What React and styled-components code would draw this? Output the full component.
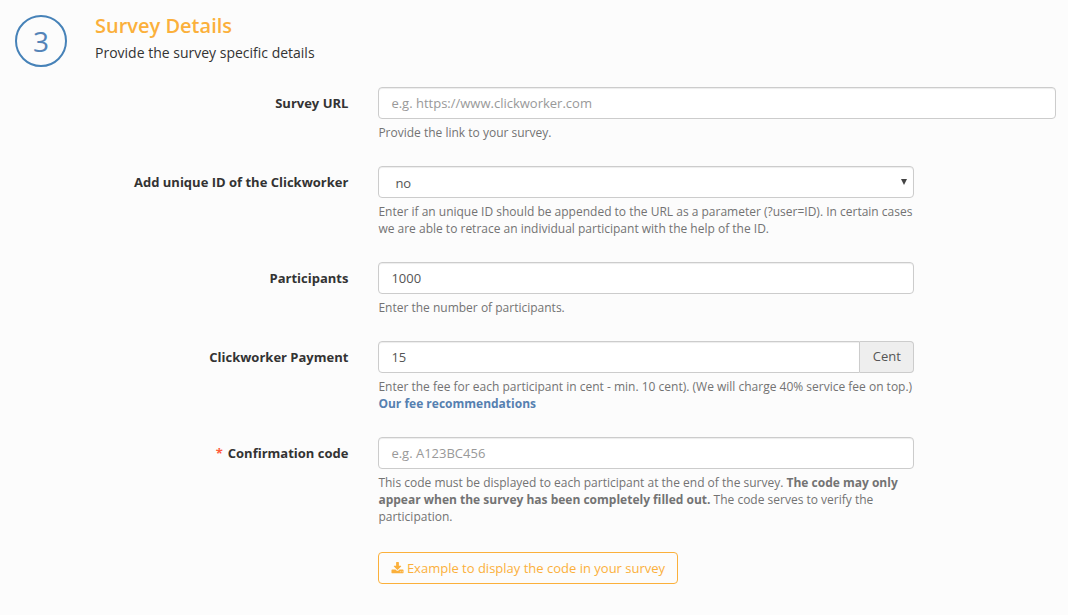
import React from 'react';
import styled, { createGlobalStyle, css } from 'styled-components';

const GlobalStyle = createGlobalStyle`
  *, *::before, *::after { box-sizing: border-box; }
  body {
    margin: 0;
    background: #fcfcfc;
    color: #333;
    font-family: "Open Sans", "Liberation Sans", sans-serif;
    font-size: 13px;
  }
`;

const Section = styled.section`
  min-height: 615px;
  padding: 15px 12px 0 15px;
`;

const Header = styled.header`
  display: flex;
  gap: 28px;
  height: 72px;
`;

const StepBadge = styled.div`
  display: flex;
  align-items: center;
  justify-content: center;
  width: 52px;
  height: 52px;
  border: 2px solid #4682b8;
  border-radius: 50%;
  color: #5484b8;
  font-size: 28px;
  line-height: 48px;
`;

const Title = styled.h2`
  margin: 0;
  color: #fbb03b;
  font-size: 20px;
  font-weight: 600;
  line-height: 22px;
`;

const Subtitle = styled.p`
  margin: 6px 0 0;
  font-size: 14px;
  line-height: 20px;
`;

const Row = styled.div`
  display: grid;
  grid-template-columns: 333.4px 1fr;
  column-gap: 30px;
  margin-bottom: ${(p) => p.$gap ?? 25}px;
`;

const Label = styled.label`
  padding-top: 7px;
  text-align: right;
  font-weight: 700;
  line-height: 19px;
`;

const Required = styled.span`
  margin-right: 5px;
  color: #ff5b3d;
`;

const Field = styled.div`
  width: ${(p) => (p.$wide ? '678px' : '536px')};
`;

const control = css`
  display: block;
  width: 100%;
  height: 32px;
  border: 1px solid #ccc;
  border-radius: 4px;
  background: #fff;
  box-shadow: inset 0 1px 1px rgba(0, 0, 0, 0.075);
  color: #555;
  font: 13px "Open Sans", "Liberation Sans", sans-serif;
  outline: none;
`;

const Input = styled.input`
  ${control}
  padding: 6px 12px;
  &::placeholder { color: #999; opacity: 1; }
`;

const InputGroup = styled.div`
  display: flex;
  ${Input} {
    flex: 1;
    border-radius: 4px 0 0 4px;
  }
`;

const Addon = styled.span`
  display: flex;
  align-items: center;
  justify-content: center;
  width: 54px;
  padding-bottom: 2px;
  border: 1px solid #ccc;
  border-left: 0;
  border-radius: 0 4px 4px 0;
  background: #eee;
  color: #555;
`;

const SelectBox = styled.div`
  position: relative;
`;

const Select = styled.select`
  ${control}
  appearance: none;
  padding: 7px 16px;
`;

const Arrow = styled.svg`
  position: absolute;
  top: 13px;
  right: 7px;
  width: 6px;
  height: 6px;
  fill: #444;
  pointer-events: none;
`;

const Help = styled.p`
  margin: 5px 0 0;
  color: #737373;
  font-size: 12px;
  line-height: 17px;
`;

const Link = styled.a`
  color: #5680b0;
  font-weight: 700;
  text-decoration: none;
`;

const Button = styled.button`
  display: flex;
  align-items: center;
  gap: 2.5px;
  width: 300px;
  height: 32px;
  padding: 0 12px;
  border: 1px solid #fbb03b;
  border-radius: 4px;
  background: transparent;
  color: #fbb03b;
  font: 13px "Open Sans", "Liberation Sans", sans-serif;
  white-space: nowrap;
`;

const Icon = styled.svg`
  flex: none;
  width: 13px;
  height: 13px;
  fill: currentColor;
`;

function FormRow({ label, id, required, wide, gap, children }) {
  return (
    <Row $gap={gap}>
      <Label htmlFor={id}>
        {required && <Required>*</Required>}
        {label}
      </Label>
      <Field $wide={wide}>{children}</Field>
    </Row>
  );
}

export default function App() {
  return (
    <>
      <GlobalStyle />
      <Section>
        <Header>
          <StepBadge>3</StepBadge>
          <div>
            <Title>Survey Details</Title>
            <Subtitle>Provide the survey specific details</Subtitle>
          </div>
        </Header>

        <FormRow label="Survey URL" id="url" wide>
          <Input id="url" placeholder="e.g. https://www.clickworker.com" />
          <Help>Provide the link to your survey.</Help>
        </FormRow>

        <FormRow label="Add unique ID of the Clickworker" id="unique">
          <SelectBox>
            <Select id="unique" defaultValue="no">
              <option value="no">no</option>
            </Select>
            <Arrow viewBox="0 0 6 6"><path d="M0 0h6L3 6z" /></Arrow>
          </SelectBox>
          <Help>
            Enter if an unique ID should be appended to the URL as a parameter (?user=ID). In certain cases
            <br />
            we are able to retrace an individual participant with the help of the ID.
          </Help>
        </FormRow>

        <FormRow label="Participants" id="participants">
          <Input id="participants" defaultValue="1000" />
          <Help>Enter the number of participants.</Help>
        </FormRow>

        <FormRow label="Clickworker Payment" id="payment">
          <InputGroup>
            <Input id="payment" defaultValue="15" />
            <Addon>Cent</Addon>
          </InputGroup>
          <Help>
            Enter the fee for each participant in cent - min. 10 cent). (We will charge 40% service fee on top.)
            <br />
            <Link>Our fee recommendations</Link>
          </Help>
        </FormRow>

        <FormRow label="Confirmation code" id="code" required gap={27}>
          <Input id="code" placeholder="e.g. A123BC456" />
          <Help>
            This code must be displayed to each participant at the end of the survey. <b>The code may only
            <br />
            appear when the survey has been completely filled out.</b> The code serves to verify the
            <br />
            participation.
          </Help>
        </FormRow>

        <FormRow gap={0}>
          <Button type="button">
            <Icon viewBox="0 0 1792 1792">
              <path d="M1344 1344q0-26-19-45t-45-19-45 19-19 45 19 45 45 19 45-19 19-45zm256 0q0-26-19-45t-45-19-45 19-19 45 19 45 45 19 45-19 19-45zm128-224v320q0 40-28 68t-68 28h-1472q-40 0-68-28t-28-68v-320q0-40 28-68t68-28h465l135 136q58 56 136 56t136-56l136-136h464q40 0 68 28t28 68zm-325-569q17 41-14 70l-448 448q-18 19-45 19t-45-19l-448-448q-31-29-14-70 17-39 59-39h256v-448q0-26 19-45t45-19h256q26 0 45 19t19 45v448h256q42 0 59 39z" />
            </Icon>
            Example to display the code in your survey
          </Button>
        </FormRow>
      </Section>
    </>
  );
}
